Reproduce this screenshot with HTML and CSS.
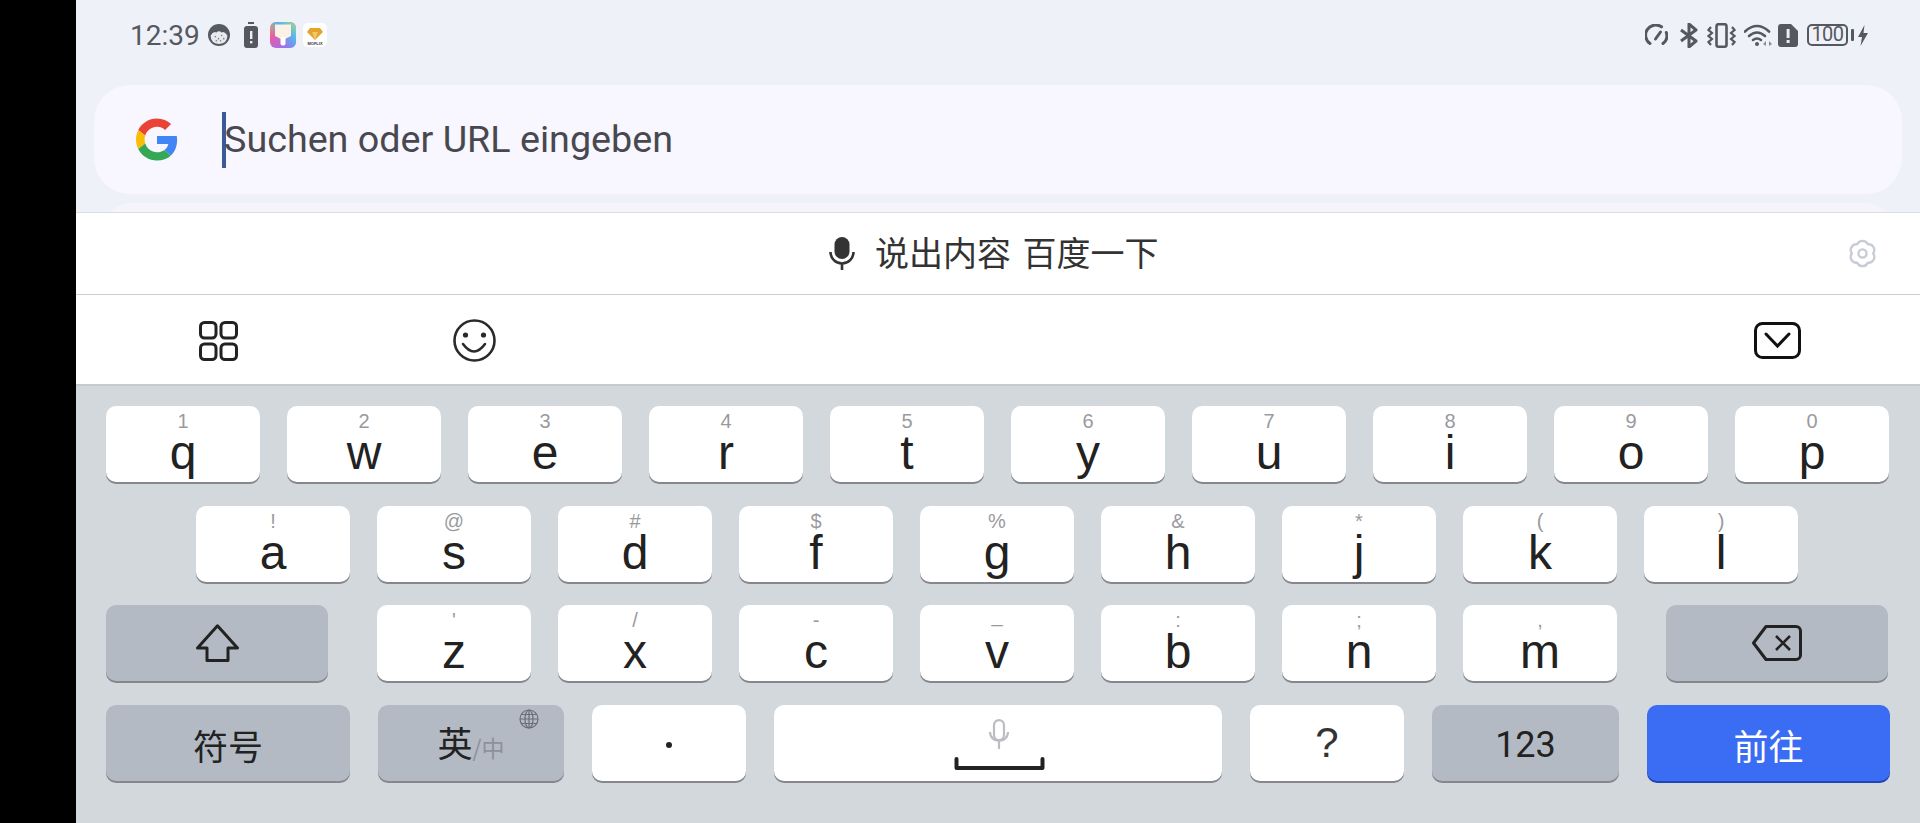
FILE: index.html
```html
<!DOCTYPE html>
<html lang="zh">
<head>
  <meta charset="UTF-8" />
  <meta name="viewport" content="width=device-width, initial-scale=1.0"/>
  <title>Keyboard</title>
  <link rel="stylesheet" href="styles.css">
</head>
<body>
  <div class="screen">
    <div class="top">
      <div class="status">
        <span class="time">12:39</span>
        <svg class="ic-face" width="22" height="22" viewBox="0 0 21 21"><circle cx="10.500" cy="10.500" r="10.500" fill="#565a62"/><path d="M2.500 11 Q5 6.500 8 8 Q10.500 6 13 8 Q16 6.500 18.500 11 Q18.500 18.500 10.500 19 Q2.500 18.500 2.500 11Z" fill="#e9eaef"/><g fill="#888"><circle cx="7" cy="12" r=".8"/><circle cx="10" cy="14" r=".8"/><circle cx="13" cy="11" r=".8"/><circle cx="15" cy="14" r=".8"/><circle cx="8" cy="16" r=".8"/><circle cx="12" cy="16" r=".8"/></g></svg>
        <svg class="ic-batt" width="14" height="26" viewBox="0 0 14 26"><rect x="4" y="0" width="6" height="2" fill="#55585f"/><rect x="0" y="4" width="14" height="22" rx="3" fill="#55585f"/><rect x="6" y="9" width="2.400" height="8" fill="#eceef5"/><rect x="6" y="19" width="2.400" height="2.400" fill="#eceef5"/></svg>
        <svg class="ic-brush" width="26" height="26" viewBox="0 0 26 26">
          <defs>
            <linearGradient id="brushA" x1="0" y1="0" x2="0.600" y2="1"><stop offset="0" stop-color="#f5a93f"/><stop offset=".45" stop-color="#ea5ca4"/><stop offset="1" stop-color="#9a72ee"/></linearGradient>
            <linearGradient id="brushB" x1="1" y1="0" x2="0.300" y2="0.700"><stop offset="0" stop-color="#a6dc7c"/><stop offset=".5" stop-color="#55b4f2"/><stop offset="1" stop-color="#55b4f2" stop-opacity="0"/></linearGradient>
          </defs>
          <rect width="26" height="26" rx="6" fill="url(#brushA)"/>
          <rect width="26" height="26" rx="6" fill="url(#brushB)"/>
          <path d="M5 2.500H21V14L15 17H11L5 14Z" fill="#fbf1e4"/>
          <rect x="10.500" y="15" width="5" height="8.500" rx="2" fill="#fff"/>
        </svg>
        <svg class="ic-gem" width="24" height="24" viewBox="0 0 24 24"><rect width="24" height="24" rx="5" fill="#fff"/><path d="M7 5 H17 L20 9 L12 17 L4 9Z" fill="#e3a32c"/><path d="M9 9 H15 L12 17Z" fill="#f4c766"/><text x="12" y="22" text-anchor="middle" class="gem-text">MOFLIX</text></svg>
        <div class="status-right">
          <svg class="ic-speed" width="23" height="22" viewBox="0 0 23 22" fill="none" stroke="#55585f" stroke-width="3" stroke-linecap="round"><path d="M5 19.500A10 10 0 0 1 16.500 2.800"/><path d="M21.300 8.500A10 10 0 0 1 18 19.500"/><path d="M15.500 8L10.500 15"/></svg>
          <svg class="ic-bt" width="18" height="25" viewBox="0 0 18 25" fill="none" stroke="#55585f" stroke-width="3" stroke-linejoin="round"><path d="M1 7L16 18L9 24V1L16 7L1 18"/></svg>
          <svg class="ic-vib" width="29" height="25" viewBox="0 0 29 25" fill="none" stroke="#55585f" stroke-width="2.200"><rect x="9.500" y="1.200" width="10" height="22.500" rx="2" stroke-width="2.600"/><path d="M4 4L1.500 7L5 10L1.500 13L5 16L1.500 19L4 22"/><path d="M25 4L27.500 7L24 10L27.500 13L24 16L27.500 19L25 22"/></svg>
          <svg class="ic-wifi" width="28" height="24" viewBox="0 0 28 24" fill="none" stroke="#55585f" stroke-width="2.600" stroke-linecap="round"><path d="M1 8.500Q13 -2.500 25 8.500"/><path d="M5 13Q13 6 21 13"/><path d="M9 17Q13 14 17 17"/><circle cx="13" cy="21" r="2" fill="#55585f" stroke="none"/><path d="M22 18L19 21L22 23ZM25 18V23L28 21Z" fill="#8a8d94" stroke="none"/></svg>
          <svg class="ic-sim" width="20" height="23" viewBox="0 0 20 23"><path d="M3 0H13L20 7V20A3 3 0 0 1 17 23H3A3 3 0 0 1 0 20V3A3 3 0 0 1 3 0Z" fill="#55585f"/><rect x="8.600" y="5" width="3" height="9" fill="#eceef5"/><rect x="8.600" y="16" width="3" height="3" fill="#eceef5"/></svg>
          <span class="batt">100</span>
          <svg class="ic-bolt" width="10" height="21" viewBox="0 0 10 21"><path d="M6.500 0L0 12H4L2.500 21L10 8H5.500Z" fill="#55585f"/></svg>
        </div>
      </div>
      <div class="search">
        <svg class="g-logo" width="42" height="43" viewBox="0 0 48 48">
          <path fill="#EA4335" d="M24 9.500c3.540 0 6.710 1.220 9.210 3.600l6.850-6.850C35.900 2.380 30.470 0 24 0 14.620 0 6.510 5.380 2.560 13.220l7.980 6.190C12.430 13.720 17.740 9.500 24 9.500z"/>
          <path fill="#4285F4" d="M46.980 24.550c0-1.570-.15-3.090-.38-4.550H24v9.020h12.940c-.58 2.960-2.260 5.480-4.780 7.180l7.730 6c4.510-4.180 7.090-10.360 7.090-17.650z"/>
          <path fill="#FBBC05" d="M10.530 28.590c-.48-1.450-.76-2.990-.76-4.590s.27-3.140.76-4.590l-7.980-6.190C.92 16.460 0 20.120 0 24c0 3.880.92 7.540 2.560 10.780l7.970-6.190z"/>
          <path fill="#34A853" d="M24 48c6.480 0 11.930-2.130 15.890-5.810l-7.730-6c-2.150 1.450-4.920 2.300-8.160 2.300-6.260 0-11.570-4.220-13.470-9.910l-7.980 6.190C6.510 42.620 14.620 48 24 48z"/>
        </svg>
        <span class="caret"></span>
        <span class="placeholder">Suchen oder URL eingeben</span>
      </div>
      <div class="next-card"></div>
    </div>

    <div class="candidate">
      <svg width="26" height="33" viewBox="0 0 26 33"><rect x="5.500" y="0" width="15" height="22" rx="7.500" fill="#333"/><path d="M1.500 15A11.500 11.500 0 0 0 24.500 15M13 27V33" fill="none" stroke="#333" stroke-width="2.600"/></svg>
      <span class="candidate-text">说出内容 百度一下</span>
      <svg class="gear" width="29" height="29" viewBox="0 0 30 30" fill="none" stroke="#c8ccd6" stroke-width="2.400" stroke-linejoin="round"><path d="M9.500 5.470A6 6 0 0 1 20.500 5.470A6 6 0 0 1 26 15A6 6 0 0 1 20.500 24.530A6 6 0 0 1 9.500 24.530A6 6 0 0 1 4 15A6 6 0 0 1 9.500 5.470Z"/><circle cx="15" cy="15" r="4.200"/></svg>
    </div>

    <div class="toolbar">
      <svg class="ic-grid" width="39" height="40" viewBox="0 0 39 40" fill="none" stroke="#222" stroke-width="3"><rect x="1.500" y="1.500" width="15.500" height="15.500" rx="4"/><rect x="22" y="1.500" width="15.500" height="15.500" rx="4"/><rect x="1.500" y="23" width="15.500" height="15.500" rx="4"/><rect x="22" y="23" width="15.500" height="15.500" rx="4"/></svg>
      <svg class="ic-smile" width="43" height="43" viewBox="0 0 43 43" fill="none" stroke="#2a2a2a" stroke-width="2.600"><circle cx="21.500" cy="21.500" r="20"/><circle cx="12.500" cy="16" r="2.600" fill="#2a2a2a" stroke="none"/><circle cx="30.500" cy="16" r="2.600" fill="#2a2a2a" stroke="none"/><path d="M10 25Q21 40 32 25" stroke-linecap="round"/></svg>
      <svg class="ic-down" width="47" height="37" viewBox="0 0 47 37" fill="none" stroke="#111" stroke-width="3"><rect x="1.500" y="1.500" width="44" height="34" rx="7"/><path d="M12 12L23.500 24L35 12" stroke-linecap="round"/></svg>
    </div>

    <div class="keyboard">
      <div class="row">
        <div class="key"><span class="hint">1</span><span class="letter">q</span></div>
        <div class="key"><span class="hint">2</span><span class="letter">w</span></div>
        <div class="key"><span class="hint">3</span><span class="letter">e</span></div>
        <div class="key"><span class="hint">4</span><span class="letter">r</span></div>
        <div class="key"><span class="hint">5</span><span class="letter">t</span></div>
        <div class="key"><span class="hint">6</span><span class="letter">y</span></div>
        <div class="key"><span class="hint">7</span><span class="letter">u</span></div>
        <div class="key"><span class="hint">8</span><span class="letter">i</span></div>
        <div class="key"><span class="hint">9</span><span class="letter">o</span></div>
        <div class="key"><span class="hint">0</span><span class="letter">p</span></div>
      </div>
      <div class="row row-2">
        <div class="key"><span class="hint">!</span><span class="letter">a</span></div>
        <div class="key"><span class="hint">@</span><span class="letter">s</span></div>
        <div class="key"><span class="hint">#</span><span class="letter">d</span></div>
        <div class="key"><span class="hint">$</span><span class="letter">f</span></div>
        <div class="key"><span class="hint">%</span><span class="letter">g</span></div>
        <div class="key"><span class="hint">&amp;</span><span class="letter">h</span></div>
        <div class="key"><span class="hint">*</span><span class="letter">j</span></div>
        <div class="key"><span class="hint">(</span><span class="letter">k</span></div>
        <div class="key"><span class="hint">)</span><span class="letter">l</span></div>
      </div>
      <div class="row">
        <div class="key key-gray key-shift">
          <svg width="43" height="38" viewBox="0 0 43 38" fill="none" stroke="#222" stroke-width="3" stroke-linejoin="round"><path d="M21.500 1.800L41.500 24H32V36.500H11V24H1.500Z"/></svg>
        </div>
        <div class="key"><span class="hint">'</span><span class="letter">z</span></div>
        <div class="key"><span class="hint">/</span><span class="letter">x</span></div>
        <div class="key"><span class="hint">-</span><span class="letter">c</span></div>
        <div class="key"><span class="hint hint-low">_</span><span class="letter">v</span></div>
        <div class="key"><span class="hint">:</span><span class="letter">b</span></div>
        <div class="key"><span class="hint">;</span><span class="letter">n</span></div>
        <div class="key"><span class="hint">,</span><span class="letter">m</span></div>
        <div class="key key-gray key-del">
          <svg width="50" height="36" viewBox="0 0 50 36" fill="none" stroke="#222" stroke-width="3" stroke-linejoin="round"><path d="M14 1.500H44A4.500 4.500 0 0 1 48.500 6V30A4.500 4.500 0 0 1 44 34.500H14L1.500 18Z"/><path d="M24 11L38 25M38 11L24 25" stroke-width="2.600"/></svg>
        </div>
      </div>
      <div class="row row-bottom">
        <div class="key key-gray key-sym"><span class="cjk">符号</span></div>
        <div class="key key-gray key-lang">
          <span class="cjk">英<small>/中</small></span>
          <svg class="globe" width="20" height="20" viewBox="0 0 20 20" fill="none" stroke="#696e77" stroke-width="1.200"><circle cx="10" cy="10" r="9"/><ellipse cx="10" cy="10" rx="4" ry="9"/><path d="M10 1V19M1 10H19M2.200 5.500H17.800M2.200 14.500H17.800"/></svg>
        </div>
        <div class="key key-dot"><span class="dot"></span></div>
        <div class="key key-space">
          <svg width="20" height="30" viewBox="0 0 20 30" fill="none" stroke="#bcbdc2" stroke-width="2.200"><rect x="5" y="1.100" width="10" height="20" rx="5"/><path d="M1 13A9 9 0 0 0 19 13M10 22V30"/></svg>
          <svg class="space-bar" width="91" height="13" viewBox="0 0 91 13" fill="none" stroke="#222" stroke-width="4" stroke-linecap="round" stroke-linejoin="round"><path d="M2.500 2V11H88.500V2"/></svg>
        </div>
        <div class="key key-q">?</div>
        <div class="key key-gray key-num">123</div>
        <div class="key key-go"><span class="cjk">前往</span></div>
      </div>
    </div>
  </div>
</body>
</html>
```

FILE: styles.css
```css
html, body { margin: 0; padding: 0; height: 100%; overflow: hidden; background: #000; }
body { font-family: "Liberation Sans", "Noto Sans CJK SC", sans-serif; }
svg { display: block; flex: none; }
.screen { margin-left: 76px; width: 1844px; height: 823px; display: flex; flex-direction: column; background: #d3d8dd; }

.top { height: 212px; background: #eff1f9; overflow: hidden; flex: none; }
.status { height: 70px; padding: 0 52px 0 54px; display: flex; align-items: center; box-sizing: border-box; }
.time { font-family: Roboto, sans-serif; font-size: 28px; color: #55585f; width: 67px; margin-right: 11px; white-space: nowrap; }
.ic-batt { margin-left: 14px; }
.ic-brush { margin-left: 12px; }
.ic-gem { margin-left: 7px; }
.gem-text { font-family: "Liberation Sans", sans-serif; font-size: 4px; font-weight: bold; fill: #333; }
.status-right { margin-left: auto; display: flex; align-items: center; }
.ic-bt { margin-left: 12px; }
.ic-vib { margin-left: 9px; }
.ic-wifi { margin-left: 8px; }
.ic-sim { margin-left: 6px; }
.batt { position: relative; margin-left: 9px; width: 41px; height: 22px; box-sizing: border-box; border: 2.500px solid #55585f; border-radius: 5px; font-family: Roboto, sans-serif; font-size: 20px; line-height: 17px; text-align: center; color: #55585f; letter-spacing: -.5px; }
.batt::after { content: ""; position: absolute; right: -8px; top: 3px; width: 3px; height: 12px; background: #55585f; border-radius: 1px; }
.ic-bolt { margin-left: 10px; }

.search { margin: 15px 18px 9px 18px; height: 109px; background: #f8f6fe; border-radius: 36px; display: flex; align-items: center; padding-left: 42px; }
.caret { width: 4px; height: 56px; background: #3d5a98; margin-left: 44px; }
.placeholder { font-family: Roboto, sans-serif; font-size: 37.700px; color: #48484f; white-space: nowrap; margin: 0 0 2px -2px; }
.next-card { margin: 0 30px; height: 30px; background: #f5f4fb; border-radius: 24px 24px 0 0; }

.candidate { flex: none; height: 83px; box-sizing: border-box; background: #fff; border-top: 1px solid #dcdce3; border-bottom: 1px solid #cdced3; display: flex; align-items: center; padding: 0 43px 0 753px; }
.candidate-text { font-family: "Noto Sans CJK SC", sans-serif; font-size: 34px; color: #333; margin: 0 0 4px 20px; white-space: nowrap; word-spacing: 4px; }
.gear { margin-left: auto; }

.toolbar { flex: none; height: 91px; box-sizing: border-box; background: #fff; border-bottom: 2px solid #c6cace; display: flex; align-items: center; padding: 2px 0 0 123px; }
.ic-smile { margin-left: 215px; }
.ic-down { margin-left: auto; margin-right: 119px; }

.keyboard { flex: 1; padding: 20px 0 0 30px; display: flex; flex-direction: column; gap: 23.500px; }
.row { display: flex; gap: 27px; height: 76px; }
.row-2 { padding-left: 90px; }
.row-bottom { gap: 28px; }

.key { width: 154px; height: 76px; flex: none; background: #fff; border-radius: 10px; box-shadow: 0 2px 0 #85878c; display: flex; flex-direction: column; align-items: center; color: #222; }
.hint { height: 20px; margin-top: 5px; font-size: 20px; line-height: 20px; color: #9a9a9e; }
.hint-low { margin: 0 0 5px; }
.letter { font-size: 48px; line-height: 40px; margin-top: 2px; color: #222; }

.key-gray { background: #b4bac4; justify-content: center; }
.key-shift { width: 222px; margin-right: 22px; }
.key-del { width: 222px; margin-left: 22px; }
.cjk { font-family: "Noto Sans CJK SC", sans-serif; font-size: 35px; line-height: 40px; padding-top: 4px; white-space: nowrap; }
.cjk small { font-size: 23px; color: #8c919a; }
.key-sym { width: 244px; }
.key-lang { width: 186px; position: relative; }
.globe { position: absolute; right: 25px; top: 4px; }
.key-dot { justify-content: center; }
.dot { width: 6px; height: 6px; border-radius: 50%; background: #222; margin-top: 4px; }
.key-space { width: 448px; padding: 14px 0 0 2px; box-sizing: border-box; }
.space-bar { margin-top: 8px; }
.key-q { font-size: 42px; line-height: 76px; color: #333; }
.key-num { width: 187px; font-family: Roboto, sans-serif; font-size: 36px; line-height: 40px; padding-top: 4px; box-sizing: border-box; }
.key-go { width: 243px; background: #3a6cf4; box-shadow: 0 2px 0 #1f46b5; color: #fff; justify-content: center; }
```
